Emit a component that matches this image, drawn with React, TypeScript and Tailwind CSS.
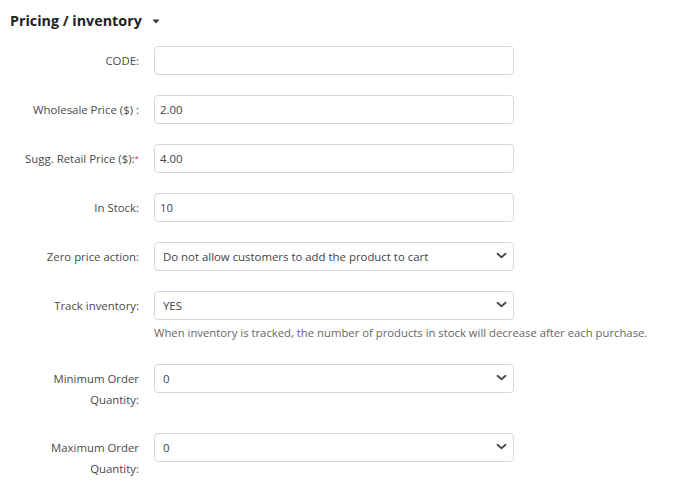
import React from "react";

const font = { fontFamily: '"Open Sans", "Noto Sans", sans-serif' };

function Chevron() {
  return (
    <svg width="11" height="7" viewBox="0 0 11 7" className="mr-[1px] mt-[-2px] shrink-0">
      <polyline points="1.5,1.8 5.5,5.3 9.5,1.8" fill="none" stroke="#454a4f" strokeWidth="1.8" strokeLinecap="round" strokeLinejoin="round" />
    </svg>
  );
}

function TextInput({ value }: { value: string }) {
  return (
    <input
      readOnly
      value={value}
      className="ml-[15px] h-[29px] w-[360px] shrink-0 rounded-[4px] border border-[#d6d9dc] bg-white px-[5px] text-[11.4px] text-[#3d4349] outline-none"
      style={font}
    />
  );
}

function SelectBox({ value }: { value: string }) {
  return (
    <div className="ml-[15px] flex h-[29px] w-[360px] shrink-0 items-center justify-between rounded-[4px] border border-[#d6d9dc] bg-white pl-[8px] pr-[5px] text-[11.4px] text-[#3d4349]">
      <span>{value}</span>
      <Chevron />
    </div>
  );
}

function Label({ children }: { children: React.ReactNode }) {
  return (
    <div className="w-[139px] shrink-0 pt-[4px] text-right text-[11.4px] leading-[21px] text-[#4a4a4a]">
      {children}
    </div>
  );
}

export default function App() {
  return (
    <div className="min-h-[488px] w-[679px] bg-white" style={font}>
      <div className="flex items-center pl-[10px] pt-[11px] leading-[20px]">
        <span className="text-[14.3px] font-bold text-[#222]">Pricing / inventory</span>
        <svg width="8" height="5" viewBox="0 0 8 5" className="ml-[10px] mt-[1px]">
          <polygon points="0.5,0.5 7.5,0.5 4,4.5" fill="#333" />
        </svg>
      </div>

      <div className="mt-[15px] flex flex-col">
        <div className="mb-[20px] flex items-start">
          <Label>CODE:</Label>
          <TextInput value="" />
        </div>
        <div className="mb-[20px] flex items-start">
          <Label>Wholesale Price ($) :</Label>
          <TextInput value="2.00" />
        </div>
        <div className="mb-[20px] flex items-start">
          <Label>
            Sugg. Retail Price ($):<sup className="relative top-[-2px] text-[8px] text-[#e3342f]">*</sup>
          </Label>
          <TextInput value="4.00" />
        </div>
        <div className="mb-[20px] flex items-start">
          <Label>In Stock:</Label>
          <TextInput value="10" />
        </div>
        <div className="mb-[20px] flex items-start">
          <Label>Zero price action:</Label>
          <SelectBox value="Do not allow customers to add the product to cart" />
        </div>
        <div className="mb-[22px] flex items-start">
          <Label>Track inventory:</Label>
          <div className="flex flex-col">
            <SelectBox value="YES" />
            <div className="ml-[15px] mt-[4px] whitespace-nowrap text-[11.3px] leading-[18px] text-[#666]">
              When inventory is tracked, the number of products in stock will decrease after each purchase.
            </div>
          </div>
        </div>
        <div className="mb-[23px] flex items-start">
          <Label>
            <span className="block">Minimum Order</span>
            <span className="block">Quantity:</span>
          </Label>
          <SelectBox value="0" />
        </div>
        <div className="flex items-start">
          <Label>
            <span className="block">Maximum Order</span>
            <span className="block">Quantity:</span>
          </Label>
          <SelectBox value="0" />
        </div>
      </div>
    </div>
  );
}
